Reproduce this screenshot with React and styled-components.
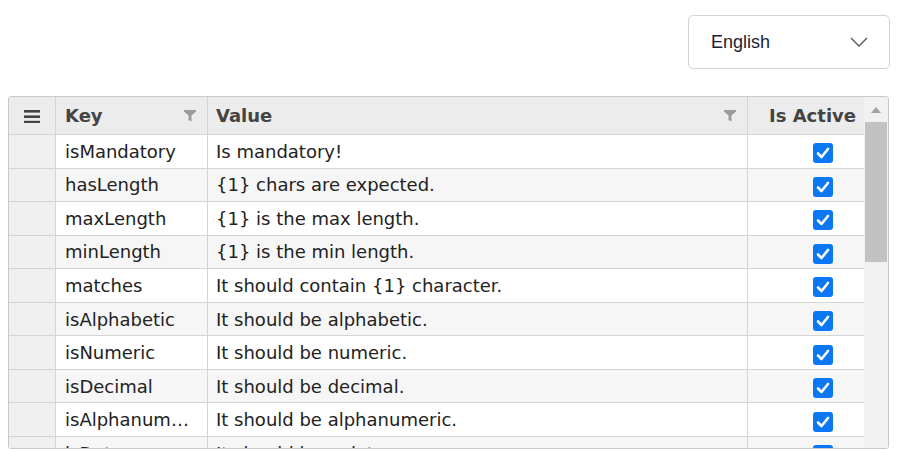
import React from 'react';
import styled, { createGlobalStyle } from 'styled-components';

const GlobalStyle = createGlobalStyle`
    html, body {
        margin: 0;
        padding: 0;
        background: #fff;
    }
    * {
        box-sizing: border-box;
    }
`;

const Page = styled.div`
    width: 900px;
    height: 450px;
    overflow: hidden;
    font-family: "DejaVu Sans", "Noto Sans CJK JP", sans-serif;
`;

const TopBar = styled.div`
    display: flex;
    justify-content: flex-end;
    padding: 15px 10px 0 0;
`;

const LangSelect = styled.div`
    width: 202px;
    height: 54px;
    border: 1px solid #d4d4d8;
    border-radius: 5px;
    display: flex;
    align-items: center;
    justify-content: space-between;
    padding: 0 21px 0 22px;
    font-family: "Liberation Sans", Arial, sans-serif;
    font-size: 18px;
    color: #1c1c34;
`;

const Grid = styled.div`
    margin: 27px 0 0 8px;
    width: 881px;
    height: 353px;
    border: 1px solid #c9c9c9;
    border-radius: 3px;
    overflow: hidden;
    display: flex;
`;

const Body = styled.div`
    flex: 1;
    display: flex;
    flex-direction: column;
    min-width: 0;
`;

const Row = styled.div`
    display: grid;
    grid-template-columns: 47px 152px 540px 116px;
    height: ${props => props.header ? '38px' : '33.56px'};
    flex-shrink: 0;
    border-bottom: 1px solid #d4d4d4;
    background: ${props => props.header ? '#ececec' : props.alt ? '#f6f6f6' : '#fff'};
`;

const Cell = styled.div`
    display: flex;
    align-items: center;
    justify-content: ${props => props.align || 'flex-start'};
    padding: ${props => props.pad || '0 9px'};
    border-right: ${props => props.last ? 'none' : '1px solid #d4d4d4'};
    background: ${props => props.gutter ? '#efefef' : 'transparent'};
    font-size: 18px;
    color: #222;
    min-width: 0;
    overflow: hidden;
`;

const HeadCell = styled(Cell)`
    font-weight: bold;
    color: #444;
    justify-content: ${props => props.align || 'space-between'};
`;

const CellText = styled.span`
    white-space: nowrap;
    overflow: hidden;
    text-overflow: ellipsis;
`;

const Check = styled.span`
    width: 20px;
    height: 20px;
    border-radius: 3px;
    background: #0b77f2;
    display: flex;
    align-items: center;
    justify-content: center;
    margin-top: 4px;
`;

const ScrollTrack = styled.div`
    width: 24px;
    background: #f1f1f1;
    display: flex;
    flex-direction: column;
    align-items: center;
`;

const ScrollArrow = styled.div`
    height: 25px;
    display: flex;
    align-items: center;
    justify-content: center;
`;

const ScrollThumb = styled.div`
    width: 22px;
    height: 140px;
    background: #c1c1c1;
`;

const MenuIcon = () => (
    <svg width="16" height="14" viewBox="0 0 16 14">
        <rect x="0" y="1" width="16" height="2.6" fill="#444" />
        <rect x="0" y="6.4" width="16" height="2.6" fill="#444" />
        <rect x="0" y="11.8" width="16" height="2.6" fill="#444" />
    </svg>
);

const FilterIcon = () => (
    <svg width="12" height="13" viewBox="0 0 12 13">
        <path d="M0 1 H12 V2.5 L7.5 6.5 V12.5 L4.5 11 V6.5 L0 2.5 Z" fill="#9a9a9a" />
    </svg>
);

const Chevron = () => (
    <svg width="18" height="10" viewBox="0 0 18 10">
        <path d="M1 1 L9 9 L17 1" fill="none" stroke="#555" strokeWidth="1.3" />
    </svg>
);

const CheckMark = () => (
    <svg width="14" height="12" viewBox="0 0 14 12">
        <path d="M2 6.5 L5.5 10 L12 2" fill="none" stroke="#fff" strokeWidth="2.6" strokeLinecap="round" strokeLinejoin="round" />
    </svg>
);

const rows = [
    { key: 'isMandatory', value: 'Is mandatory!' },
    { key: 'hasLength', value: '{1} chars are expected.' },
    { key: 'maxLength', value: '{1} is the max length.' },
    { key: 'minLength', value: '{1} is the min length.' },
    { key: 'matches', value: 'It should contain {1} character.' },
    { key: 'isAlphabetic', value: 'It should be alphabetic.' },
    { key: 'isNumeric', value: 'It should be numeric.' },
    { key: 'isDecimal', value: 'It should be decimal.' },
    { key: 'isAlphanumeric', value: 'It should be alphanumeric.' },
    { key: 'isDate', value: 'It should be a date.' },
];

export default function App() {
    return (
        <Page>
            <GlobalStyle />
            <TopBar>
                <LangSelect>
                    <span>English</span>
                    <Chevron />
                </LangSelect>
            </TopBar>
            <Grid>
                <Body>
                    <Row header>
                        <HeadCell align="center" pad="0"><MenuIcon /></HeadCell>
                        <HeadCell pad="0 11px 0 9px">Key<FilterIcon /></HeadCell>
                        <HeadCell pad="0 11px 0 8px">Value<FilterIcon /></HeadCell>
                        <HeadCell last align="flex-end" pad="0 8px 0 0">Is Active</HeadCell>
                    </Row>
                    {rows.map((r, i) => (
                        <Row key={r.key} alt={i % 2 === 1}>
                            <Cell gutter />
                            <Cell><CellText>{r.key}</CellText></Cell>
                            <Cell pad="0 8px"><CellText>{r.value}</CellText></Cell>
                            <Cell last align="flex-end" pad="0 31px 0 0">
                                <Check><CheckMark /></Check>
                            </Cell>
                        </Row>
                    ))}
                </Body>
                <ScrollTrack>
                    <ScrollArrow>
                        <svg width="10" height="6" viewBox="0 0 10 6">
                            <path d="M0 6 L5 0 L10 6 Z" fill="#a3a3a3" />
                        </svg>
                    </ScrollArrow>
                    <ScrollThumb />
                </ScrollTrack>
            </Grid>
        </Page>
    );
}
